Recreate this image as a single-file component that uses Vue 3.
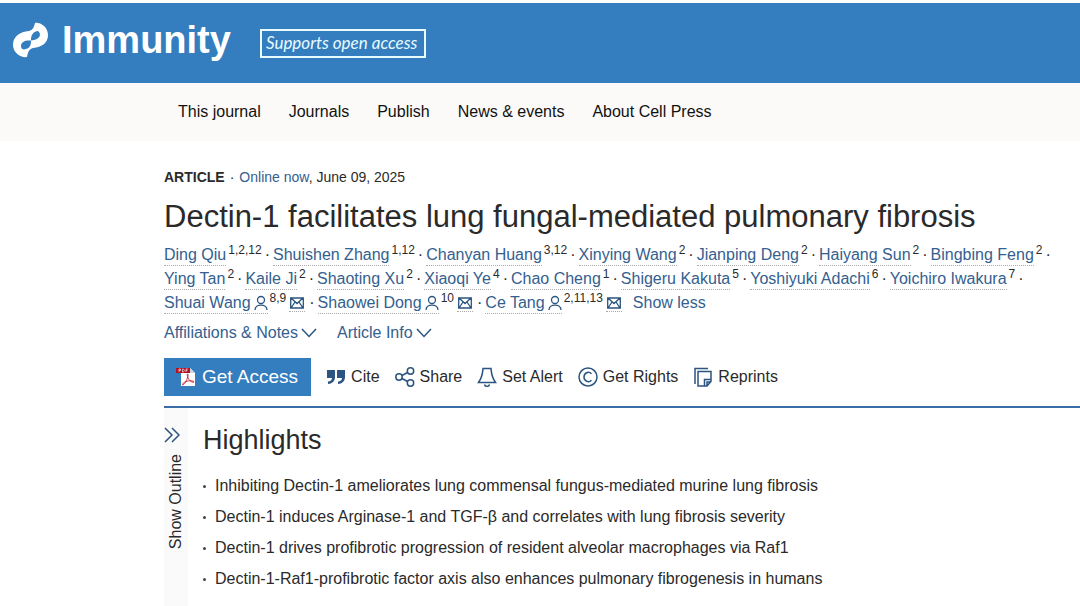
<script setup>
const navItems = ['This journal', 'Journals', 'Publish', 'News & events', 'About Cell Press']

const authorRows = [
  [
    { name: 'Ding Qiu', refs: '1,2,12' },
    { name: 'Shuishen Zhang', refs: '1,12' },
    { name: 'Chanyan Huang', refs: '3,12' },
    { name: 'Xinying Wang', refs: '2' },
    { name: 'Jianping Deng', refs: '2' },
    { name: 'Haiyang Sun', refs: '2' },
    { name: 'Bingbing Feng', refs: '2' }
  ],
  [
    { name: 'Ying Tan', refs: '2' },
    { name: 'Kaile Ji', refs: '2' },
    { name: 'Shaoting Xu', refs: '2' },
    { name: 'Xiaoqi Ye', refs: '4' },
    { name: 'Chao Cheng', refs: '1' },
    { name: 'Shigeru Kakuta', refs: '5' },
    { name: 'Yoshiyuki Adachi', refs: '6' },
    { name: 'Yoichiro Iwakura', refs: '7' }
  ],
  [
    { name: 'Shuai Wang', refs: '8,9', contact: true },
    { name: 'Shaowei Dong', refs: '10', contact: true },
    { name: 'Ce Tang', refs: '2,11,13', contact: true, last: true }
  ]
]

const details = ['Affiliations & Notes', 'Article Info']

const actions = [
  { label: 'Cite', icon: 'cite' },
  { label: 'Share', icon: 'share' },
  { label: 'Set Alert', icon: 'alert' },
  { label: 'Get Rights', icon: 'rights' },
  { label: 'Reprints', icon: 'reprints' }
]

const highlights = [
  'Inhibiting Dectin-1 ameliorates lung commensal fungus-mediated murine lung fibrosis',
  'Dectin-1 induces Arginase-1 and TGF-β and correlates with lung fibrosis severity',
  'Dectin-1 drives profibrotic progression of resident alveolar macrophages via Raf1',
  'Dectin-1-Raf1-profibrotic factor axis also enhances pulmonary fibrogenesis in humans'
]
</script>

<template>
  <div class="page">
    <header class="banner">
      <a class="brand" href="#">
        <svg class="logo" viewBox="0 0 36 36" aria-hidden="true">
          <path
            fill="#fff"
            fill-rule="evenodd"
            d="M22 1C27 0 35 5 35 13C35 21 29 25 20 26C16 27 15 30 14 35C8 36 0 31 0 23C0 14 7 10 16 9C20 8 21 5 22 1ZM18 18.500C18 13 20 9.500 25 9C29 12 27 18 18 18.500ZM18 18.500C12 18 8 20 8 24C8 27 10 28 13 27C17 26 18 23 18 18.500Z"
          />
        </svg>
        <span>Immunity</span>
      </a>
      <a class="open-access" href="#">Supports open access</a>
    </header>

    <nav class="nav">
      <a v-for="item in navItems" :key="item" href="#">{{ item }}</a>
    </nav>

    <main class="article">
      <p class="meta">
        <strong>ARTICLE</strong><span class="meta-dot">·</span><span><a href="#">Online now</a>, June 09, 2025</span>
      </p>
      <h1>Dectin-1 facilitates lung fungal-mediated pulmonary fibrosis</h1>

      <div class="authors">
        <div v-for="(row, i) in authorRows" :key="i" class="author-row">
          <span v-for="author in row" :key="author.name" class="author">
            <a class="name" href="#">{{ author.name
              }}<svg v-if="author.contact" class="person" viewBox="0 0 14 16" aria-hidden="true">
                <circle cx="7" cy="5" r="3.5" />
                <path d="M1 15C1 8.500 13 8.500 13 15" />
              </svg></a>
            <sup>{{ author.refs }}</sup>
            <a v-if="author.contact" class="mail" href="#" :aria-label="'Email ' + author.name">
              <svg viewBox="0 0 14 12" aria-hidden="true">
                <path d="M.7 1H13.300V11H.7ZM1 1L7 6.500L13 1M1 11L5 5M13 11L9 5" />
              </svg>
            </a>
            <span v-if="!author.last" class="dot">·</span>
          </span>
          <button v-if="i === 2" class="show-less" type="button">Show less</button>
        </div>
      </div>

      <div class="details">
        <button v-for="label in details" :key="label" type="button">
          {{ label }}
          <svg viewBox="0 0 16 10" aria-hidden="true"><path d="M1 1L8 8.500L15 1" /></svg>
        </button>
      </div>

      <div class="toolbar">
        <button class="get-access" type="button">
          <svg viewBox="0 0 20 20" aria-hidden="true">
            <path d="M5 1H14L19 6V19H5Z" fill="#fff" />
            <path d="M14 1V6H19Z" fill="#cbd3dc" />
            <path d="M0 1H14V6H0Z" fill="#b11226" />
            <path d="M3 5V2H4.500V3.500H3M6.500 2V5C9 5 9 2 6.500 2M10 5V2H12M10 3.500H11.500" fill="none" stroke="#fff" stroke-width=".6" />
            <path d="M11.500 7C10.500 8 12 11 13 12.500C14.500 14.500 17 16 18 15C18 13.500 13 13.500 10 14.500C7.500 15.500 6 17 6.500 18C8 18.500 11 13 11.900 9.500C12.200 8 12.300 7 11.500 7Z" fill="none" stroke="#c32032" stroke-width=".9" />
          </svg>
          Get Access
        </button>
        <button v-for="action in actions" :key="action.icon" class="action" type="button">
          <svg v-if="action.icon === 'cite'" class="solid" viewBox="0 0 20 20" aria-hidden="true">
            <path d="M1 3H9V10C9 14 6 17 2 17V14.500C4.500 14.500 6 13 6 11H1ZM11 3H19V10C19 14 16 17 12 17V14.500C14.500 14.500 16 13 16 11H11Z" />
          </svg>
          <svg v-else-if="action.icon === 'share'" viewBox="0 0 20 20" aria-hidden="true">
            <circle cx="4" cy="10" r="3.200" /><circle cx="15.500" cy="4" r="3.200" /><circle cx="15.500" cy="16" r="3.200" />
            <path d="M7 8.500L12.600 5.500M7 11.500L12.600 14.500" />
          </svg>
          <svg v-else-if="action.icon === 'alert'" viewBox="0 0 20 20" aria-hidden="true">
            <path d="M6 1.500H14C14.500 7 14.500 10 18.500 15.500H1.500C5.500 10 5.500 7 6 1.500ZM7.500 17.500C8 20 12 20 12.500 17.500" />
          </svg>
          <svg v-else-if="action.icon === 'rights'" viewBox="0 0 20 20" aria-hidden="true">
            <circle cx="10" cy="10" r="9" />
            <path d="M13.500 6.800C10.500 3.800 6 6 6 10S10.500 16.200 13.500 13.200" />
          </svg>
          <svg v-else viewBox="0 0 20 20" aria-hidden="true">
            <path d="M2 17V1.500H15" />
            <path d="M5 4.500H18V14.500L14 19H5ZM11.500 19V12.500H18M14 19V15H18" />
          </svg>
          {{ action.label }}
        </button>
      </div>

      <div class="body">
        <button class="outline" type="button">
          <svg viewBox="0 0 16 16" aria-hidden="true"><path d="M1 1L8 8L1 15M8 1L15 8L8 15" /></svg>
          <span>Show Outline</span>
        </button>
        <section class="highlights">
          <h2>Highlights</h2>
          <ul>
            <li v-for="item in highlights" :key="item">{{ item }}</li>
          </ul>
        </section>
      </div>
    </main>
  </div>
</template>

<style>
body {
  margin: 0;
  background: #fff;
}
</style>

<style scoped>
.page {
  display: flex;
  flex-direction: column;
  min-height: 100vh;
  box-sizing: border-box;
  padding-top: 3px;
  overflow: hidden;
  font-family: "Liberation Sans", Arial, sans-serif;
  font-size: 16px;
  color: #2a2a2a;
}
a {
  color: #34608f;
  text-decoration: none;
}
button {
  padding: 0;
  border: 0;
  background: none;
  font: inherit;
  color: inherit;
  cursor: pointer;
}
svg {
  flex: none;
  fill: none;
  stroke: #2b5480;
  stroke-width: 1.5;
}
.banner {
  display: flex;
  align-items: center;
  gap: 29px;
  height: 80px;
  padding: 0 13px;
  background: #347dbe;
}
.brand {
  display: flex;
  align-items: center;
  gap: 13px;
  padding-bottom: 6px;
  color: #fff;
  font-size: 38px;
  font-weight: 700;
  line-height: 44px;
}
.logo {
  width: 36px;
  height: 36px;
  stroke: none;
}
.open-access {
  padding: 0 7px 2px 4px;
  border: 2px solid #e8fbff;
  color: #e8fbff;
  font-family: Lato, "Open Sans", sans-serif;
  font-size: 17px;
  font-style: italic;
  line-height: 23px;
}
.nav {
  display: flex;
  gap: 28px;
  padding: 0 178px;
  background: #fbfaf9;
  line-height: 58px;
  white-space: nowrap;
}
.nav a {
  color: #111;
}
.article {
  display: flex;
  flex: 1;
  flex-direction: column;
  padding: 28px 0 0 164px;
}
.meta {
  display: flex;
  margin: 0;
  font-size: 14px;
  line-height: 16px;
}
.meta-dot {
  margin: 0 5px;
}
h1 {
  margin: 12px 0 0;
  font-size: 31px;
  font-weight: 400;
  line-height: 40px;
}
.authors {
  margin-top: 6px;
  white-space: nowrap;
}
.author-row {
  display: flex;
  height: 24px;
  line-height: 24px;
}
.author {
  display: flex;
  align-items: center;
}
.name {
  display: flex;
  align-items: center;
  height: 20px;
  border-bottom: 1px dotted #aaa;
  line-height: 20px;
}
.person {
  width: 14px;
  height: 16px;
  margin-left: 3px;
  stroke-width: 1.3;
}
sup {
  margin: 0 3px 10px 2px;
  font-size: 12px;
  line-height: 14px;
}
.mail {
  display: flex;
  align-items: center;
  height: 16px;
  padding: 0 1px;
  border-bottom: 1px dotted #aaa;
}
.mail svg {
  width: 14px;
  height: 12px;
  stroke-width: 1.3;
}
.dot {
  margin-right: 3px;
}
.mail + .dot {
  margin-left: 4px;
}
.show-less {
  margin-left: 11px;
  color: #34608f;
}
.details {
  display: flex;
  gap: 20px;
  margin-top: 8px;
  line-height: 20px;
}
.details button {
  display: flex;
  align-items: center;
  gap: 3px;
  color: #34608f;
}
.details svg {
  width: 16px;
  height: 10px;
}
.toolbar {
  display: flex;
  align-items: center;
  gap: 15px;
  padding: 15px 0 10px;
  border-bottom: 2px solid #3a6ca8;
  white-space: nowrap;
}
.get-access {
  display: flex;
  align-items: center;
  gap: 6px;
  height: 38px;
  padding: 0 13px 0 12px;
  background: #347dbe;
  color: #fff;
  font-size: 19px;
}
.get-access svg {
  width: 20px;
  height: 20px;
  stroke: none;
}
.action {
  display: flex;
  align-items: center;
  gap: 5px;
}
.action svg {
  width: 20px;
  height: 20px;
}
.action .solid {
  fill: #2b5480;
  stroke: none;
}
.body {
  display: flex;
  flex: 1;
  gap: 15px;
}
.outline {
  display: flex;
  flex-direction: column;
  align-items: center;
  gap: 11px;
  width: 24px;
  padding-top: 19px;
  background: #fbfafa;
}
.outline svg {
  width: 16px;
  height: 16px;
  align-self: flex-start;
}
.outline span {
  writing-mode: vertical-rl;
  transform: rotate(180deg);
  line-height: 20px;
}
.highlights {
  padding-top: 16px;
}
h2 {
  margin: 0;
  font-size: 27px;
  font-weight: 400;
  line-height: 32px;
}
ul {
  display: grid;
  gap: 11px;
  margin: 20px 0 0;
  padding: 0;
  list-style: none;
}
li {
  display: flex;
  align-items: center;
  gap: 9px;
  line-height: 20px;
}
li::before {
  content: "";
  width: 3px;
  height: 3px;
  border-radius: 50%;
  background: #444;
}
</style>
